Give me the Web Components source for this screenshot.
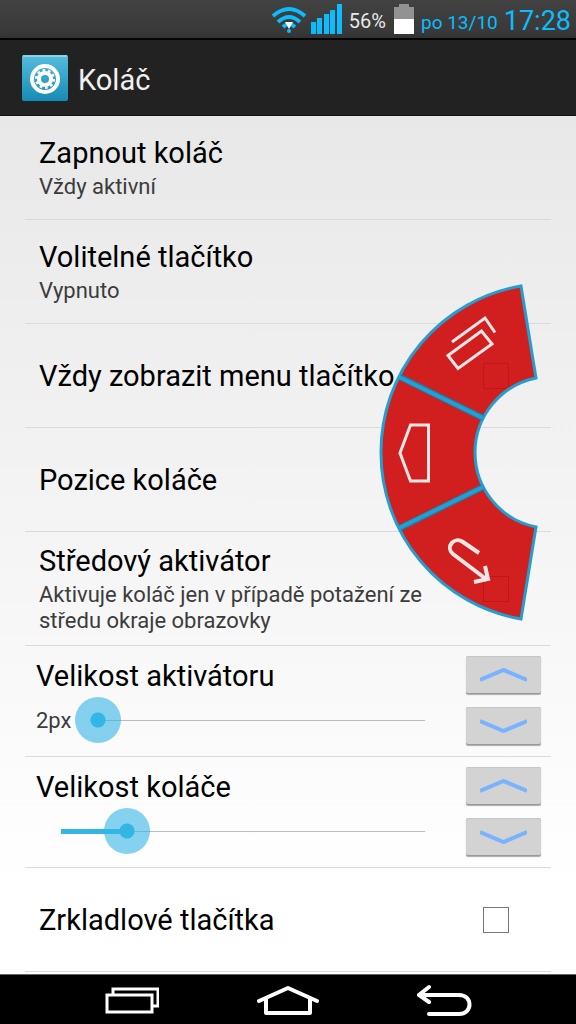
<!DOCTYPE html>
<html lang="cs">
<head>
<meta charset="utf-8">
<meta name="viewport" content="width=device-width, initial-scale=1">
<title>Koláč</title>
<style>
  body { margin: 0; font-family: Roboto, "Noto Sans", sans-serif; background: #fff; color: #000; }
</style>
</head>
<body>
<pie-screen></pie-screen>
<script>
const define = (name, html, setup) => {
  const template = document.createElement('template');
  template.innerHTML = html;
  customElements.define(name, class extends HTMLElement {
    constructor() {
      super();
      this.attachShadow({ mode: 'open' }).append(template.content.cloneNode(true));
    }
    connectedCallback() { if (setup) setup(this, this.shadowRoot); }
  });
};

define('status-bar', `
<style>
  :host { display: flex; justify-content: flex-end; align-items: center; height: 38px; padding-right: 5px;
    background: linear-gradient(#424242, #373737); border-bottom: 2px solid #050505; color: #0bbcff; }
  svg { display: block; flex: none; }
  .wifi { margin-right: 4px; }
  .pct { color: #e8e8e8; font-size: 20px; line-height: 38px; padding-top: 4px; margin: 0 8px 0 7px; }
  .date { font-size: 19px; line-height: 38px; padding-top: 8px; margin: 0 6px 0 7px; }
  .time { font-size: 27px; line-height: 38px; padding-top: 3px; }
</style>
<svg class="wifi" width="36" height="30" viewBox="0 0 36 30" aria-label="Wi-Fi" role="img">
  <g fill="none" stroke="#0bbcff" stroke-width="4"><path d="M2 12Q18-2 34 12"/><path d="M7 18Q18 8 29 18"/><path d="M12 23Q18 17 24 23"/></g>
  <circle cx="18" cy="27" r="2" fill="#0bbcff"/><path d="M14 18h8l-4 7z" fill="#fff"/>
</svg>
<svg width="31" height="30" viewBox="0 0 31 30" fill="#0bbcff" aria-label="Signál" role="img">
  <path d="M0 18h5v12H0zM6 14h5v16H6zM13 10h5v20h-5zM19 6h5v24h-5zM26 0h5v30h-5z"/>
</svg>
<span class="pct">56%</span>
<svg width="20" height="30" viewBox="0 0 20 30" aria-label="Baterie" role="img"><path d="M5 0h10v3h5v12H0V3h5z" fill="#929292"/><path d="M0 15h20v15H0z" fill="#fff"/></svg>
<span class="date">po 13/10</span><time class="time">17:28</time>
`);

define('app-header', `
<style>
  :host { display: flex; align-items: center; gap: 10px; height: 75px; padding-left: 22px; background: #222;
    border-bottom: 1px solid #111; box-shadow: 0 1px 8px rgba(0,0,0,.4); position: relative; }
  h1 { margin: 0; font-size: 29px; line-height: 36px; font-weight: 400; color: #f0f0f0; padding-top: 4px; }
  svg { display: block; }
</style>
<svg width="46" height="46" viewBox="0 0 46 46" aria-hidden="true">
  <defs><linearGradient id="g" x2="0" y2="1"><stop stop-color="#55bddd"/><stop offset="1" stop-color="#168bb5"/></linearGradient></defs>
  <rect width="46" height="46" rx="2" fill="url(#g)"/><path d="M1 1h44" stroke="#8bd2e8" stroke-width="2"/>
  <circle cx="23" cy="24" r="13" fill="none" stroke="#fff" stroke-width="4"/>
  <circle cx="23" cy="24" r="6" fill="none" stroke="#fff" stroke-width="4"/>
  <circle cx="23" cy="24" r="8.500" fill="none" stroke="#fff" stroke-width="3" stroke-dasharray="2.600 2.740"/>
</svg>
<h1>Koláč</h1>
`);

define('pref-row', `
<style>
  :host { display: flex; align-items: center; box-sizing: border-box; min-height: 104px;
    padding: 8px 42px 8px 14px; border-bottom: 1px solid #dadada; }
  label { flex: 1; display: block; padding-right: 10px; }
  .title { display: block; font-size: 29px; line-height: 36px; white-space: nowrap; }
  ::slotted(*) { display: block; margin-top: 3px; font-size: 22px; line-height: 26px; color: #3c3c3c; }
  input { appearance: none; flex: none; width: 26px; height: 26px; margin: 0; border: 1px solid #777; background: transparent; }
  input:checked { background: #33b5e5; }
</style>
<label for="box"><span class="title"></span><slot></slot></label>
<input id="box" type="checkbox">
`, (host, root) => {
  root.querySelector('.title').textContent = host.getAttribute('heading');
  if (!host.hasAttribute('checkbox')) root.querySelector('input').remove();
});

define('step-button', `
<style>
  :host { display: block; }
  button { display: grid; place-items: center; width: 75px; height: 38px; padding: 0; border: 0; border-radius: 2px;
    background: #d3d3d3; box-shadow: inset 0 1px #c6c6c6, inset 0 -1px #999, 0 1px 1px #aaa; }
  :host([down]) svg { transform: rotate(180deg); }
</style>
<button type="button"><svg width="47" height="14" viewBox="0 0 47 14" aria-hidden="true"><path d="M0 12 23.500 2 47 12" fill="none" stroke="#77b3ff" stroke-width="4"/></svg></button>
`, (host, root) => {
  root.querySelector('button').setAttribute('aria-label', host.hasAttribute('down') ? 'Zmenšit' : 'Zvětšit');
});

define('slider-row', `
<style>
  :host { display: flex; box-sizing: border-box; min-height: 111px; padding: 10px 10px 10px 11px; gap: 18px;
    border-bottom: 1px solid #dadada; --fill: 0%; }
  .body { flex: 1; }
  label { display: block; font-size: 29px; line-height: 41px; }
  .line { display: flex; align-items: center; height: 46px; gap: 4px; }
  output { font-size: 22px; line-height: 26px; padding-top: 2px; color: #3c3c3c; }
  output:empty { display: none; }
  input { appearance: none; flex: 1; min-width: 0; height: 46px; margin: 0; border: 0; padding: 0 23px;
    background:
      linear-gradient(#33b5e5, #33b5e5) 0 50% / var(--fill) 5px no-repeat content-box,
      linear-gradient(#bbb, #bbb) 0 50% / 100% 1px no-repeat content-box; }
  output:empty + input { margin-left: 2px; }
  input::-webkit-slider-runnable-track { height: 46px; margin: 0 -23px; }
  input::-webkit-slider-thumb { appearance: none; width: 46px; height: 46px; border-radius: 50%;
    background: radial-gradient(circle, #33b5e5 7px, rgba(51,181,229,.6) 8px); }
  .steps { display: grid; gap: 13px; align-content: start; }
</style>
<div class="body"><label for="range"></label>
  <div class="line"><output></output><input id="range" type="range" min="0" max="100"></div></div>
<div class="steps"><step-button></step-button><step-button down></step-button></div>
`, (host, root) => {
  const input = root.querySelector('input');
  root.querySelector('label').textContent = host.getAttribute('heading');
  root.querySelector('output').textContent = host.getAttribute('unit') || '';
  const paint = () => input.style.setProperty('--fill', input.value + '%');
  input.value = host.getAttribute('value');
  input.addEventListener('input', paint);
  paint();
});

define('pie-control', `
<style>
  :host { position: absolute; right: 0; top: 164px; pointer-events: none; }
  svg { display: block; }
</style>
<svg width="206" height="350" viewBox="370 280 206 350" role="img" aria-label="Koláč">
  <path d="M521 286A169 169 0 0 0 521 619L536 527A76 76 0 0 1 536 378Z" fill="#ce0a0a" fill-opacity=".91" stroke="#229fd0" stroke-width="3"/>
  <g stroke="#187fae" stroke-width="6"><path d="M400 377 483 418M400 528 483 487"/></g>
  <g stroke="#239fd1" stroke-width="4"><path d="M399 377 483 418M399 528 483 487"/></g>
  <g fill="none" stroke="#fbe6e6" stroke-width="3">
    <path d="M448 355.500 481.500 331 492 344 458 368.500ZM452 342 485 318 495 332.500"/>
    <path d="M400 453 410.500 425H428.500V481H410.500Z"/>
    <path d="M479 553 463 542C454 536 445 547 453 554L486 579M474 582 488 579 485 566" stroke-width="4"/>
  </g>
</svg>
`);

define('nav-bar', `
<style>
  :host { display: grid; grid-template-columns: 1fr 1fr 1fr; box-sizing: border-box; height: 50px; padding: 0 53px;
    background: #000; border-top: 1px solid #666; }
  button { display: grid; place-items: center; padding: 0; border: 0; background: none; }
  svg { fill: none; stroke: #fff; stroke-width: 4; }
</style>
<button type="button" aria-label="Poslední aplikace"><svg width="56" height="30" viewBox="0 0 56 30"><path d="M4 10H49V27H4ZM10 10V4H55V21H49" stroke-width="3"/></svg></button>
<button type="button" aria-label="Domů"><svg width="62" height="30" viewBox="0 0 62 30" stroke-linecap="round" stroke-linejoin="round"><path d="M2 16 31 3 60 16M9 14V28H53V14"/></svg></button>
<button type="button" aria-label="Zpět"><svg width="56" height="32" viewBox="0 0 56 32" stroke-linecap="round"><path d="M12 3 2 11 12 18M3 11H42C56 11 56 30 42 30H12"/></svg></button>
`);

define('pie-screen', `
<style>
  :host { display: flex; flex-direction: column; min-height: 100vh; }
  main { flex: 1; position: relative; background: linear-gradient(#e8e8e8, #fff 90%); }
  .list { margin: 0 25px; }
  .tall { min-height: 114px; }
</style>
<status-bar></status-bar>
<app-header></app-header>
<main>
  <div class="list">
    <pref-row heading="Zapnout koláč"><span>Vždy aktivní</span></pref-row>
    <pref-row heading="Volitelné tlačítko"><span>Vypnuto</span></pref-row>
    <pref-row heading="Vždy zobrazit menu tlačítko" checkbox></pref-row>
    <pref-row heading="Pozice koláče"></pref-row>
    <pref-row class="tall" heading="Středový aktivátor" checkbox><span>Aktivuje koláč jen v případě potažení ze středu okraje obrazovky</span></pref-row>
    <slider-row heading="Velikost aktivátoru" unit="2px" value="0"></slider-row>
    <slider-row heading="Velikost koláče" value="18"></slider-row>
    <pref-row heading="Zrkladlové tlačítka" checkbox></pref-row>
  </div>
  <pie-control></pie-control>
</main>
<nav-bar></nav-bar>
`);
</script>
</body>
</html>
